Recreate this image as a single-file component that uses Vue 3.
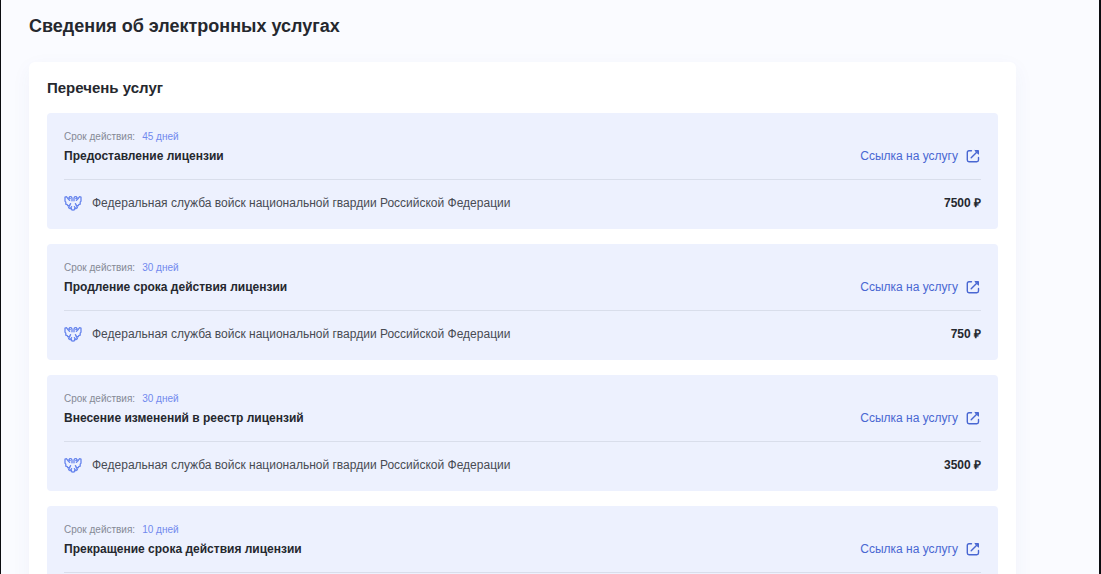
<script setup>
const title = 'Сведения об электронных услугах';
const listTitle = 'Перечень услуг';
const agency = 'Федеральная служба войск национальной гвардии Российской Федерации';

// Список услуг
const services = [
    { id: 1, term: '45 дней', name: 'Предоставление лицензии', agency, price: '7500 ₽' },
    { id: 2, term: '30 дней', name: 'Продление срока действия лицензии', agency, price: '750 ₽' },
    { id: 3, term: '30 дней', name: 'Внесение изменений в реестр лицензий', agency, price: '3500 ₽' },
    { id: 4, term: '10 дней', name: 'Прекращение срока действия лицензии' }
];
</script>

<template>
    <main class="page">
        <h1 class="page-title">{{ title }}</h1>

        <section class="panel">
            <h2 class="panel-title">{{ listTitle }}</h2>

            <article v-for="service in services" :key="service.id" class="card">
                <div class="term">
                    <span>Срок действия:</span>
                    <span class="term-value">{{ service.term }}</span>
                </div>
                <div class="card-head">
                    <h3 class="card-title">{{ service.name }}</h3>
                    <a href="#" class="service-link">
                        Ссылка на услугу
                        <svg class="link-icon" viewBox="0 0 14 14" aria-hidden="true">
                            <path d="M5.5 1.7H3Q1.3 1.7 1.3 3.4V11Q1.3 12.7 3 12.7H10.8Q12.5 12.7 12.5 11V8.5" />
                            <path d="M5.2 8.8L11.5 2.5" />
                            <path class="arrow-head" d="M9.2 1.5H12.5V4.8Z" />
                        </svg>
                    </a>
                </div>
                <div v-if="service.agency" class="card-foot">
                    <!-- Двуглавый орёл -->
                    <svg class="eagle" viewBox="0 0 18 16" aria-hidden="true">
                        <path d="M8 5.8V3.2Q7.6 1.2 5.8 1.6L4.8 3L6.2 3.6M10 5.8V3.2Q10.4 1.2 12.2 1.6L13.2 3L11.8 3.6" />
                        <path d="M5.6 5.4L3.6 3.2L2.4 1.6L1 2V6.2L1.8 7.2V9.2L3.2 9.6L3.8 10.8L5.6 10.4L6.6 8.6" />
                        <path d="M12.4 5.4L14.4 3.2L15.6 1.6L17 2V6.2L16.2 7.2V9.2L14.8 9.6L14.2 10.8L12.4 10.4L11.4 8.6" />
                        <path d="M5.6 10.4L4.6 12.6L6.2 13.6L7.6 11.6M12.4 10.4L13.4 12.6L11.8 13.6L10.4 11.6" />
                        <path d="M7.4 13.2V14.6L9 15.2L10.6 14.6V13.2" />
                    </svg>
                    <span>{{ service.agency }}</span>
                    <strong class="price">{{ service.price }}</strong>
                </div>
            </article>
        </section>
    </main>
</template>

<style>
body {
    margin: 0;
}
</style>

<style scoped>
.page {
    box-sizing: border-box;
    height: 100vh;
    padding: 16px 83px 0 28px;
    overflow: hidden;
    border-left: 1px solid #0b0c10;
    border-right: 2px solid #0b0c10;
    background: #fafbff;
    color: #25282e;
    font-family: "Liberation Sans", Arial, sans-serif;
    font-size: 12px;
    line-height: 16px;
}

.page-title,
.panel-title,
.card-title {
    margin: 0;
    font-weight: 700;
}

.page-title {
    font-size: 18px;
    line-height: 20px;
}

.panel {
    margin-top: 26px;
    padding: 16px 18px;
    border-radius: 6px;
    background: #ffffff;
    box-shadow: 0 6px 20px rgba(60, 80, 150, 0.05);
}

.panel-title {
    margin-bottom: 15px;
    font-size: 15px;
    line-height: 20px;
}

.card {
    margin-bottom: 15px;
    padding: 16px 17px;
    border-radius: 4px;
    background: #edf1fe;
}

.term {
    display: flex;
    gap: 7px;
    color: #858995;
    font-size: 10px;
    line-height: 15px;
}

.term-value {
    color: #7189ee;
}

.card-head {
    display: flex;
    align-items: center;
    justify-content: space-between;
    padding: 4px 0 15px;
    border-bottom: 1px solid #d9deeb;
}

.card-title {
    font-size: 12px;
}

.service-link {
    display: flex;
    align-items: center;
    gap: 8px;
    padding-right: 1px;
    color: #4967d2;
    text-decoration: none;
}

.service-link:hover {
    color: #2f4cb5;
}

.link-icon {
    width: 14px;
    height: 14px;
    fill: none;
    stroke: #4967d2;
    stroke-width: 1.4;
    stroke-linecap: round;
    stroke-linejoin: round;
}

.arrow-head {
    fill: #4967d2;
    stroke-width: 1;
}

.card-foot {
    display: flex;
    align-items: center;
    padding: 14px 0 1px;
    color: #484b53;
    line-height: 18px;
}

.eagle {
    width: 18px;
    height: 16px;
    margin-right: 10px;
    fill: none;
    stroke: #6684ed;
    stroke-width: 1.3;
    stroke-linecap: round;
    stroke-linejoin: round;
}

.price {
    margin-left: auto;
    color: #25282e;
}
</style>
